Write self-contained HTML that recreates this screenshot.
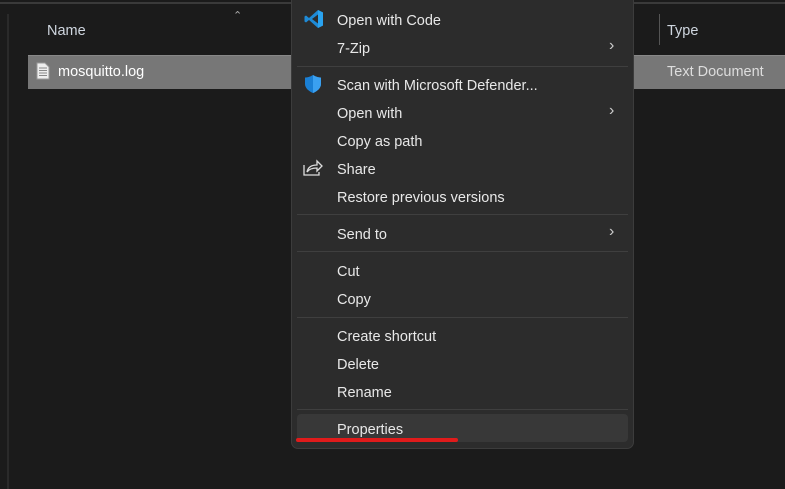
<!DOCTYPE html>
<html><head><style>
body{margin:0;width:785px;height:489px;background:#1b1b1b;position:relative;overflow:hidden;font-family:"Liberation Sans",sans-serif;color:#e8e8e8;font-size:14.5px}
.a{position:absolute}
.t{position:absolute;left:337px;line-height:20px;white-space:nowrap}
.sep{position:absolute;left:297px;width:331px;height:1px;background:#3f3f3f}
.chev{position:absolute;left:609px;font-size:16px;color:#ccc}
</style></head><body>
<div class="a" style="left:0;top:2px;width:785px;height:2px;background:#3a3a3a"></div>
<div class="a" style="left:7px;top:14px;width:2px;height:475px;background:#2a2a2a"></div>
<div class="a" style="left:47px;top:23px;color:#cfd6df">Name</div>
<div class="a" style="left:233px;top:9px;color:#aaa;font-size:11px">&#8963;</div>
<div class="a" style="left:659px;top:14px;width:1px;height:31px;background:#555"></div>
<div class="a" style="left:667px;top:23px;color:#cfd6df">Type</div>
<div class="a" style="left:28px;top:55px;width:757px;height:33px;background:#777;border-top:1px solid #888"></div>
<svg class="a" style="left:36px;top:62px" width="14" height="18"><path d="M1 1h8l4 4v12H1z" fill="#eee" stroke="#999"/><path d="M3 6h8M3 8.5h8M3 11h8M3 13.5h8" stroke="#888"/></svg>
<div class="a" style="left:58px;top:64px;color:#fff">mosquitto.log</div>
<div class="a" style="left:667px;top:64px;color:#ddd">Text Document</div>

<div class="a" style="left:291px;top:-8px;width:341px;height:455px;background:#2c2c2c;border:1px solid #3c3c3c;border-radius:7px"></div>
<svg class="a" style="left:304px;top:9px" width="20" height="20" viewBox="0 0 20 20"><path d="M14 1l5 2.5v13L14 19 5 11l-3 2.5-1.5-1v-5L2 6.5 5 9z" fill="#1e8ad6"/><path d="M14 5.5v9L8 10z" fill="#2c2c2c"/><path d="M14 1l5 2.5v13L14 19z" fill="#2aa3f0"/></svg>
<div class="t" style="top:11px">Open with Code</div>
<div class="t" style="top:39px">7-Zip</div><div class="chev" style="top:37px">&#8250;</div>
<div class="sep" style="top:66px"></div>
<svg class="a" style="left:304px;top:74px" width="18" height="20" viewBox="0 0 18 20"><path d="M9 1C6 3 3 3.5 1 3.5V10c0 4 4 7.5 8 9 4-1.5 8-5 8-9V3.5C15 3.5 12 3 9 1z" fill="#1a7fd4"/><path d="M9 1v18c4-1.5 8-5 8-9V3.5C15 3.5 12 3 9 1z" fill="#3aa0f0"/></svg>
<div class="t" style="top:76px">Scan with Microsoft Defender...</div>
<div class="t" style="top:104px">Open with</div><div class="chev" style="top:102px">&#8250;</div>
<div class="t" style="top:132px">Copy as path</div>
<svg class="a" style="left:303px;top:158px" width="20" height="18" viewBox="0 0 20 18" fill="none" stroke="#ddd" stroke-width="1.3"><path d="M1 7v10h15v-3"/><path d="M4 14c1-5 5-7 10-7V3l5 5-5 5V10c-4 0-8 1-10 4z"/></svg>
<div class="t" style="top:160px">Share</div>
<div class="t" style="top:188px">Restore previous versions</div>
<div class="sep" style="top:214px"></div>
<div class="t" style="top:225px">Send to</div><div class="chev" style="top:223px">&#8250;</div>
<div class="sep" style="top:251px"></div>
<div class="t" style="top:262px">Cut</div>
<div class="t" style="top:290px">Copy</div>
<div class="sep" style="top:317px"></div>
<div class="t" style="top:327px">Create shortcut</div>
<div class="t" style="top:355px">Delete</div>
<div class="t" style="top:383px">Rename</div>
<div class="sep" style="top:409px"></div>
<div class="a" style="left:297px;top:414px;width:331px;height:28px;background:#383838;border-radius:4px"></div>
<div class="t" style="top:420px">Properties</div>
<div class="a" style="left:296px;top:438px;width:162px;height:4px;background:#e01b1b;border-radius:2px"></div>
</body></html>
